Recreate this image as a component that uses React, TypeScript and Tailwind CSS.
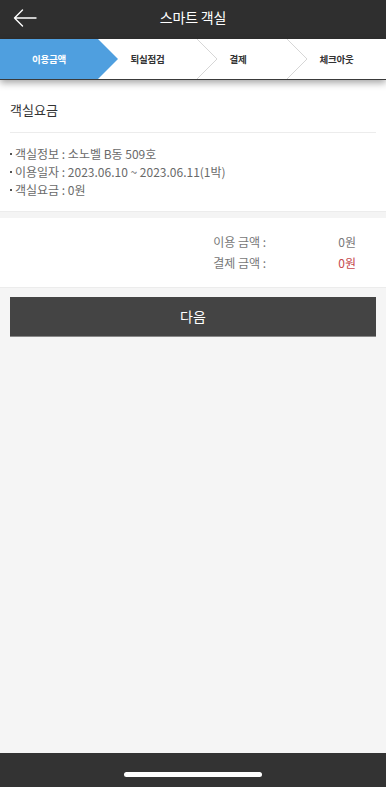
import React from 'react';

const font = { fontFamily: '"Noto Sans CJK KR", "Noto Sans", sans-serif' };

const steps = [
  { label: '이용금액', w: 'w-[98px]', active: true },
  { label: '퇴실점검', w: 'w-[99px]', active: false },
  { label: '결제', w: 'w-[82px]', active: false },
  { label: '체크아웃', w: 'flex-1 pl-[8px]', active: false },
];

const info = [
  '객실정보 : 소노벨 B동 509호',
  '이용일자 : 2023.06.10 ~ 2023.06.11(1박)',
  '객실요금 : 0원',
];

function StepBar() {
  return (
    <div className="relative z-10 h-[41px] bg-white border-b border-[#3a3a3a] shadow-[0_3px_7px_rgba(0,0,0,0.35)]">
      {/* chevron shapes */}
      <svg className="absolute inset-0" width="386" height="40" viewBox="0 0 386 40">
        <polygon points="0,0 98,0 118,20 98,40 0,40" fill="#4f9fdf" />
        <polyline points="197,0 217,20 197,40" fill="none" stroke="#d6d6d6" strokeWidth="1" />
        <polyline points="287,0 307,20 287,40" fill="none" stroke="#d6d6d6" strokeWidth="1" />
      </svg>
      <div className="relative flex h-10 items-center">
        {steps.map((s) => (
          <div
            key={s.label}
            className={`${s.w} text-center text-[9.5px] font-bold tracking-[-0.3px] ${s.active ? 'text-white' : 'text-[#333]'}`}
          >
            {s.label}
          </div>
        ))}
      </div>
    </div>
  );
}

export default function App() {
  return (
    <div className="flex h-[787px] w-[386px] flex-col overflow-hidden bg-[#f5f5f5]" style={font}>
      {/* header */}
      <div className="relative flex h-[39px] items-center justify-center bg-[#2f2f2f]">
        <svg className="absolute left-[13px] top-[9px]" width="24" height="18" viewBox="0 0 24 18">
          <path d="M23 9H1.5M9.5 1L1.5 9l8 8" fill="none" stroke="#fff" strokeWidth="1.4" strokeLinecap="round" strokeLinejoin="round" />
        </svg>
        <span className="text-[14px] text-white -mt-[4px] tracking-[-0.2px]">스마트 객실</span>
      </div>

      <StepBar />

      {/* room fee */}
      <div className="bg-white px-[10px] pt-[20px] pb-[12px]">
        <div className="text-[13px] leading-5 text-[#333]">객실요금</div>
        <div className="mt-[12px] h-px bg-[#ececec]" />
        <div className="mt-[12px] flex flex-col">
          {info.map((t) => (
            <div key={t} className="flex items-center text-[12px] leading-[18px] text-[#6a6a6a]">
              <span className="mr-[3px] h-[2px] w-[2px] bg-[#555]" />
              <span>{t}</span>
            </div>
          ))}
        </div>
      </div>

      <div className="h-[7px] border-t border-[#ececec] bg-[#f4f4f4]" />

      {/* summary */}
      <div className="bg-white pt-[13px] pb-[14px] pr-[30px]">
        <div className="flex justify-end text-[12px] leading-[21px] text-[#777]">
          <span>이용 금액 :</span>
          <span className="w-[90px] text-right">0원</span>
        </div>
        <div className="flex justify-end text-[12px] leading-[21px] text-[#777]">
          <span>결제 금액 :</span>
          <span className="w-[90px] text-right text-[#c5484b]">0원</span>
        </div>
      </div>

      <div className="h-px bg-[#ececec]" />

      <div className="px-[10px] pt-[9px]">
        <button className="flex h-[40px] w-full items-center justify-center bg-[#444] text-[14px] text-white border-b border-[#888]">
          다음
        </button>
      </div>

      <div className="flex-1" />

      {/* home indicator bar */}
      <div className="flex h-[34px] items-start justify-center bg-[#333] pt-[19px]">
        <div className="h-[5px] w-[138px] rounded-full bg-white" />
      </div>
    </div>
  );
}
